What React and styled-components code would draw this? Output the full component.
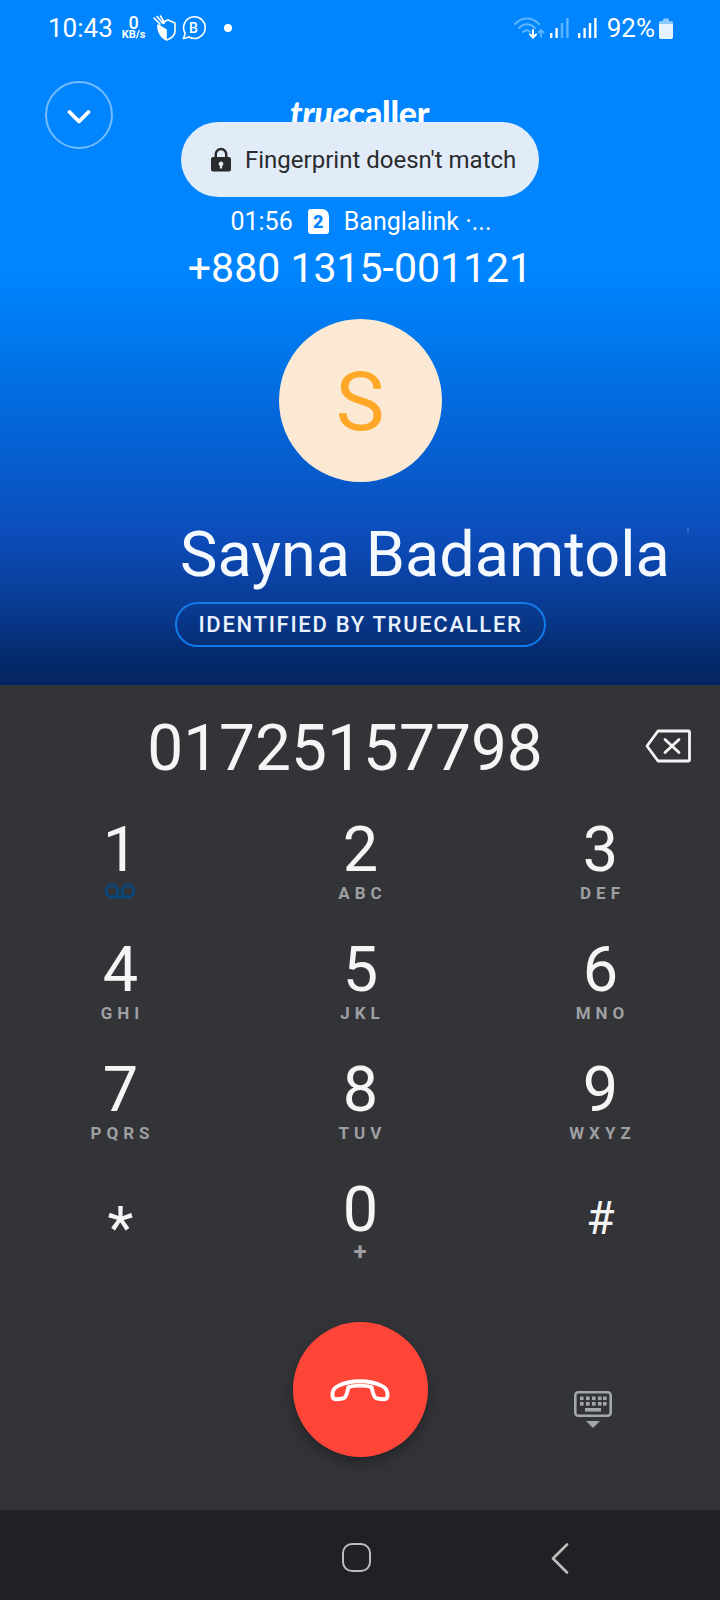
import React from "react";
import styled, { createGlobalStyle } from "styled-components";

const Global = createGlobalStyle`
  html, body { margin: 0; padding: 0; background: #202124; }
  * { box-sizing: border-box; }
`;

const Screen = styled.div`
  width: 720px;
  height: 1600px;
  display: flex;
  flex-direction: column;
  overflow: hidden;
  font-family: Roboto, "Liberation Sans", sans-serif;
  color: #fff;
`;

const Hero = styled.section`
  position: relative;
  height: 685px;
  flex: none;
  display: flex;
  flex-direction: column;
  background: linear-gradient(180deg, #0085ff 0, #0085ff 270px, #0078ee 340px, #0562d4 440px, #0c4bb8 540px, #093a90 610px, #052c72 650px, #04245f 685px);
`;

const StatusBar = styled.header`
  height: 56px;
  padding: 0 47px 0 48px;
  display: flex;
  align-items: center;
  justify-content: space-between;
`;

const StatusGroup = styled.div`
  display: flex;
  align-items: center;
  gap: ${(p) => p.$gap || 0}px;
`;

const Slot = styled.span`
  display: flex;
  margin-left: ${(p) => p.$left || 0}px;
`;

const Clock = styled.span`
  font-size: 26px;
  line-height: 1;
`;

const Speed = styled.span`
  display: flex;
  flex-direction: column;
  align-items: center;
  margin-left: 3px;
  font-weight: 700;
  font-size: 11px;
  line-height: 10px;
  strong {
    font-size: 18px;
    line-height: 14px;
    font-weight: 500;
  }
`;

const BizBadge = styled.span`
  position: relative;
  width: 24px;
  height: 24px;
  display: flex;
  align-items: center;
  justify-content: center;
  font-size: 14px;
  font-weight: 500;
  svg { position: absolute; inset: 0; }
`;

const Dot = styled.span`
  width: 8px;
  height: 8px;
  margin-left: 12px;
  border-radius: 50%;
  background: #fff;
`;

const Percent = styled.span`
  font-size: 26px;
  line-height: 1;
  margin-left: 10px;
  margin-right: 4px;
`;

const TopRow = styled.div`
  height: 92px;
  padding: 25px 0 0 45px;
  display: grid;
  grid-template-columns: 68px 1fr;
`;

const Collapse = styled.button`
  width: 68px;
  height: 68px;
  padding: 3px 0 0;
  display: flex;
  align-items: center;
  justify-content: center;
  background: transparent;
  border: 2px solid rgba(255, 255, 255, 0.45);
  border-radius: 50%;
`;

const Logo = styled.div`
  margin: 14px 0 0 177px;
  font-family: Lato, "Noto Sans", sans-serif;
  font-size: 34px;
  line-height: 36px;
  font-weight: 900;
  letter-spacing: -0.3px;
  em { font-style: italic; }
`;

const Toast = styled.div`
  position: absolute;
  left: 181px;
  top: 122px;
  width: 358px;
  height: 75px;
  display: flex;
  align-items: center;
  gap: 14px;
  padding-left: 30px;
  border-radius: 38px;
  background: #e1ecf8;
  color: #2a2b2d;
  font-size: 24px;
`;

const CallMeta = styled.div`
  margin-top: 55px;
  height: 36px;
  padding-left: 2px;
  display: flex;
  justify-content: center;
  align-items: center;
  gap: 15px;
  font-size: 25px;
`;

const SimBadge = styled.span`
  width: 21px;
  height: 25px;
  display: flex;
  align-items: center;
  justify-content: center;
  background: #fff;
  color: #0084ff;
  border-radius: 3px 7px 3px 3px;
  font-size: 18px;
  font-weight: 900;
`;

const Phone = styled.div`
  height: 58px;
  display: flex;
  align-items: center;
  justify-content: center;
  font-size: 41px;
`;

const Avatar = styled.div`
  width: 163px;
  height: 163px;
  margin: 22px auto 0;
  padding-top: 2px;
  display: flex;
  align-items: center;
  justify-content: center;
  border-radius: 50%;
  background: #fce9d4;
  color: #ffa726;
  font-size: 82px;
  font-weight: 400;
`;

const Identity = styled.div`
  margin: 35px 0 0 175px;
  display: flex;
  flex-direction: column;
  align-items: flex-start;
`;

const Name = styled.h1`
  position: relative;
  width: 545px;
  margin: 0 0 0 5px;
  height: 75px;
  font-size: 63px;
  line-height: 75px;
  font-weight: 400;
  white-space: nowrap;
  color: #f4f8ff;
  &::after {
    content: "";
    position: absolute;
    left: 507px;
    top: 11px;
    width: 2px;
    height: 5px;
    background: #2b66c0;
  }
`;

const Pill = styled.div`
  width: 371px;
  height: 45px;
  margin-top: 10px;
  display: flex;
  align-items: center;
  justify-content: center;
  border: 2px solid #1279e8;
  border-radius: 23px;
  font-size: 22px;
  font-weight: 500;
  letter-spacing: 1.7px;
  color: #eaf2ff;
`;

const DialPanel = styled.section`
  flex: 1;
  display: flex;
  flex-direction: column;
  background: #333438;
`;

const DialEntry = styled.div`
  position: relative;
  height: 127px;
  padding-right: 30px;
  display: flex;
  align-items: center;
  justify-content: center;
  font-size: 64px;
  color: #f5f5f5;
`;

const BackspaceSlot = styled.span`
  position: absolute;
  left: 645px;
  top: 44px;
  display: flex;
`;

const Keypad = styled.div`
  display: grid;
  grid-template-columns: repeat(3, 240px);
  grid-auto-rows: 120px;
`;

const Key = styled.div`
  display: flex;
  flex-direction: column;
  align-items: center;
  color: #f5f5f5;
`;

const Digit = styled.span`
  height: 76px;
  line-height: 76px;
  margin-left: 1px;
  margin-top: ${(p) => p.$shift || 0}px;
  font-size: ${(p) => p.$size || 63}px;
`;

const Letters = styled.span`
  height: 18px;
  line-height: 18px;
  margin-top: -4px;
  font-size: 17px;
  font-weight: 700;
  letter-spacing: 5px;
  margin-right: -5px;
  color: #9e9fa2;
`;

const PlusSign = styled.span`
  height: 18px;
  line-height: 18px;
  margin-top: -5px;
  font-size: 24px;
  font-weight: 700;
  color: #9e9fa2;
`;

const VoicemailSlot = styled.span`
  display: flex;
  margin-top: -5px;
`;

const ActionRow = styled.div`
  display: grid;
  grid-template-columns: repeat(3, 240px);
  margin-top: 30px;
  justify-items: center;
`;

const EndCall = styled.button`
  width: 135px;
  height: 135px;
  padding: 0;
  display: flex;
  align-items: center;
  justify-content: center;
  border: 0;
  border-radius: 50%;
  background: #ff4438;
  box-shadow: 0 6px 14px rgba(0, 0, 0, 0.3);
`;

const KeyboardToggle = styled.div`
  margin-top: 69px;
  margin-left: -15px;
`;

const NavBar = styled.nav`
  height: 90px;
  flex: none;
  display: flex;
  align-items: flex-start;
  gap: 180px;
  background: #202124;
  padding: 33px 0 0 342px;
`;

const HomeButton = styled.span`
  width: 29px;
  height: 29px;
  border: 2.5px solid #bdbdbd;
  border-radius: 10px;
`;

function Shield() {
  return (
    <svg width="24" height="26" viewBox="0 0 24 26" fill="none" stroke="#fff" strokeWidth="1.600" strokeLinecap="round" strokeLinejoin="round">
      <path d="M11 7l5-2 7 3v8c0 4-3 7-8 9-4-1.500-7-5-8-10" />
      <path d="M6 10l8 5v9c-4-2-7-6-8-11z" fill="#fff" />
      <path d="M2 3l6 6M5 1.500l6 7M8.500 1l4 7" />
    </svg>
  );
}

function Bubble() {
  return (
    <svg width="24" height="24" viewBox="0 0 24 24" fill="none" stroke="#fff" strokeWidth="1.600">
      <path d="M1.500 22.500l1.700-5.200A10.800 10.800 0 1 1 7 21z" strokeLinejoin="round" />
    </svg>
  );
}

function Wifi() {
  return (
    <svg width="31" height="22" viewBox="0 0 31 22" fill="none" strokeLinecap="round">
      <path d="M1 7C8-0.500 18-0.500 25 7" stroke="#5db4ff" strokeWidth="2" />
      <path d="M5 11c5-5 11-5 16 0" stroke="#5db4ff" strokeWidth="2" />
      <path d="M9 15c3-2.500 5-2.500 7 0" stroke="#5db4ff" strokeWidth="2" />
      <path d="M19 13v7M16 17.500l3 3 3-3" stroke="#fff" strokeWidth="2" />
      <path d="M27 20v-7M24.500 15.500l2.500-2.500 2.500 2.500" stroke="#5db4ff" strokeWidth="1.800" />
    </svg>
  );
}

function Signal({ dim }) {
  const far = dim ? "#5db4ff" : "#fff";
  return (
    <svg width="19" height="20" viewBox="0 0 19 20" fill="#fff">
      <rect x="0" y="15" width="2.400" height="5" rx="0.500" />
      <rect x="5.400" y="10" width="2.400" height="10" rx="0.500" />
      <rect x="10.800" y="5" width="2.400" height="15" rx="0.500" fill={far} />
      <rect x="16.200" y="0" width="2.400" height="20" rx="0.500" fill={far} />
    </svg>
  );
}

function Battery() {
  return (
    <svg width="14" height="21" viewBox="0 0 14 21">
      <path d="M4 1.500a1 1 0 0 1 1-1h4a1 1 0 0 1 1 1V3H4z" fill="#8ccaff" />
      <path d="M0 5a2 2 0 0 1 2-2h10a2 2 0 0 1 2 2v1H0z" fill="#8ccaff" />
      <path d="M0 6h14v13a2 2 0 0 1-2 2H2a2 2 0 0 1-2-2z" fill="#e4f3ff" />
    </svg>
  );
}

function Chevron() {
  return (
    <svg width="24" height="16" viewBox="0 0 24 16" fill="none" stroke="#fff" strokeWidth="3.800" strokeLinecap="round" strokeLinejoin="round">
      <path d="M2.500 3L12 12.500 21.500 3" />
    </svg>
  );
}

function Lock() {
  return (
    <svg width="20" height="25" viewBox="0 0 21 25">
      <path d="M5 11V7a5.500 5.500 0 0 1 11 0v4" fill="none" stroke="#2a2b2d" strokeWidth="2.600" />
      <path fillRule="evenodd" fill="#2a2b2d" d="M2 10h17a2 2 0 0 1 2 2v11a2 2 0 0 1-2 2H2a2 2 0 0 1-2-2V12a2 2 0 0 1 2-2zm8.500 4.500a2.500 2.500 0 0 0-1.200 4.700V22h2.400v-2.800a2.500 2.500 0 0 0-1.200-4.700z" />
    </svg>
  );
}

function Backspace() {
  return (
    <svg width="46" height="34" viewBox="0 0 46 34" fill="none" stroke="#f5f5f5" strokeWidth="2.800" strokeLinejoin="round" strokeLinecap="round">
      <path d="M13 2h30.500a1 1 0 0 1 1 1v28a1 1 0 0 1-1 1H13L2 17z" />
      <path d="M20 10.500l14 13M34 10.500l-14 13" />
    </svg>
  );
}

function Voicemail() {
  return (
    <svg width="32" height="16" viewBox="0 0 32 16" fill="none" stroke="#0d4779" strokeWidth="3">
      <circle cx="8" cy="8" r="6" />
      <circle cx="24" cy="8" r="6" />
      <path d="M8 14h16" />
    </svg>
  );
}

function HangUp() {
  return (
    <svg width="60" height="24" viewBox="0 0 62 24" fill="none" stroke="#fff" strokeWidth="4" strokeLinejoin="round">
      <path d="M31 3C22 3 14 5 8 8c-4 2-5.500 5-5.500 9 0 3 1.500 4.500 3.500 4.500 4 0 7-.5 9-1.500 2-1.500 3-6 4-11 3-1 8-1.500 12-1.500s9 .5 12 1.500c1 5 2 9.500 4 11 2 1 5 1.500 9 1.500 2 0 3.500-1.500 3.500-4.500 0-4-1.500-7-5.500-9-6-3-14-5-23-5z" />
    </svg>
  );
}

function KeyboardDown() {
  return (
    <svg width="38" height="38" viewBox="0 0 38 38">
      <rect x="1.300" y="1.300" width="35.400" height="23.400" rx="3" fill="none" stroke="#a3a6ad" strokeWidth="2.600" />
      <g fill="#a3a6ad">
        {[6, 12, 18, 24, 29].map((x) => (
          <rect key={`a${x}`} x={x} y="5.500" width="3.600" height="3.600" />
        ))}
        {[6, 12, 18, 24, 29].map((x) => (
          <rect key={`b${x}`} x={x} y="11" width="3.600" height="3.600" />
        ))}
        <rect x="11" y="17" width="16" height="3.600" />
        <path d="M12 30h14l-7 7z" />
      </g>
    </svg>
  );
}

function Back() {
  return (
    <svg width="18" height="31" viewBox="0 0 18 31" fill="none" stroke="#bdbdbd" strokeWidth="2.600" strokeLinecap="round" strokeLinejoin="round">
      <path d="M16 1.500L2 15.500l14 14" />
    </svg>
  );
}

const keys = [
  ["1", null], ["2", "ABC"], ["3", "DEF"],
  ["4", "GHI"], ["5", "JKL"], ["6", "MNO"],
  ["7", "PQRS"], ["8", "TUV"], ["9", "WXYZ"],
];

export default function App() {
  return (
    <Screen>
      <Global />
      <Hero>
        <StatusBar>
          <StatusGroup $gap={6}>
            <Clock>10:43</Clock>
            <Speed><strong>0</strong>KB/s</Speed>
            <Shield />
            <BizBadge><Bubble />B</BizBadge>
            <Dot />
          </StatusGroup>
          <StatusGroup>
            <Wifi />
            <Slot $left={5}><Signal dim /></Slot>
            <Slot $left={9}><Signal /></Slot>
            <Percent>92%</Percent>
            <Battery />
          </StatusGroup>
        </StatusBar>
        <TopRow>
          <Collapse aria-label="Collapse"><Chevron /></Collapse>
          <Logo><em>true</em>caller</Logo>
        </TopRow>
        <Toast><Lock />Fingerprint doesn't match</Toast>
        <CallMeta>
          <span>01:56</span>
          <SimBadge>2</SimBadge>
          <span>Banglalink ·...</span>
        </CallMeta>
        <Phone>+880 1315-001121</Phone>
        <Avatar>S</Avatar>
        <Identity>
          <Name>Sayna Badamtola</Name>
          <Pill>IDENTIFIED BY TRUECALLER</Pill>
        </Identity>
      </Hero>
      <DialPanel>
        <DialEntry>
          01725157798
          <BackspaceSlot><Backspace /></BackspaceSlot>
        </DialEntry>
        <Keypad>
          {keys.map(([digit, letters]) => (
            <Key key={digit}>
              <Digit>{digit}</Digit>
              {letters ? <Letters>{letters}</Letters> : <VoicemailSlot><Voicemail /></VoicemailSlot>}
            </Key>
          ))}
          <Key><Digit $size={60} $shift={18}>*</Digit></Key>
          <Key>
            <Digit>0</Digit>
            <PlusSign>+</PlusSign>
          </Key>
          <Key><Digit $size={46} $shift={8}>#</Digit></Key>
        </Keypad>
        <ActionRow>
          <span />
          <EndCall aria-label="End call"><HangUp /></EndCall>
          <KeyboardToggle><KeyboardDown /></KeyboardToggle>
        </ActionRow>
      </DialPanel>
      <NavBar>
        <HomeButton />
        <Back />
      </NavBar>
    </Screen>
  );
}
